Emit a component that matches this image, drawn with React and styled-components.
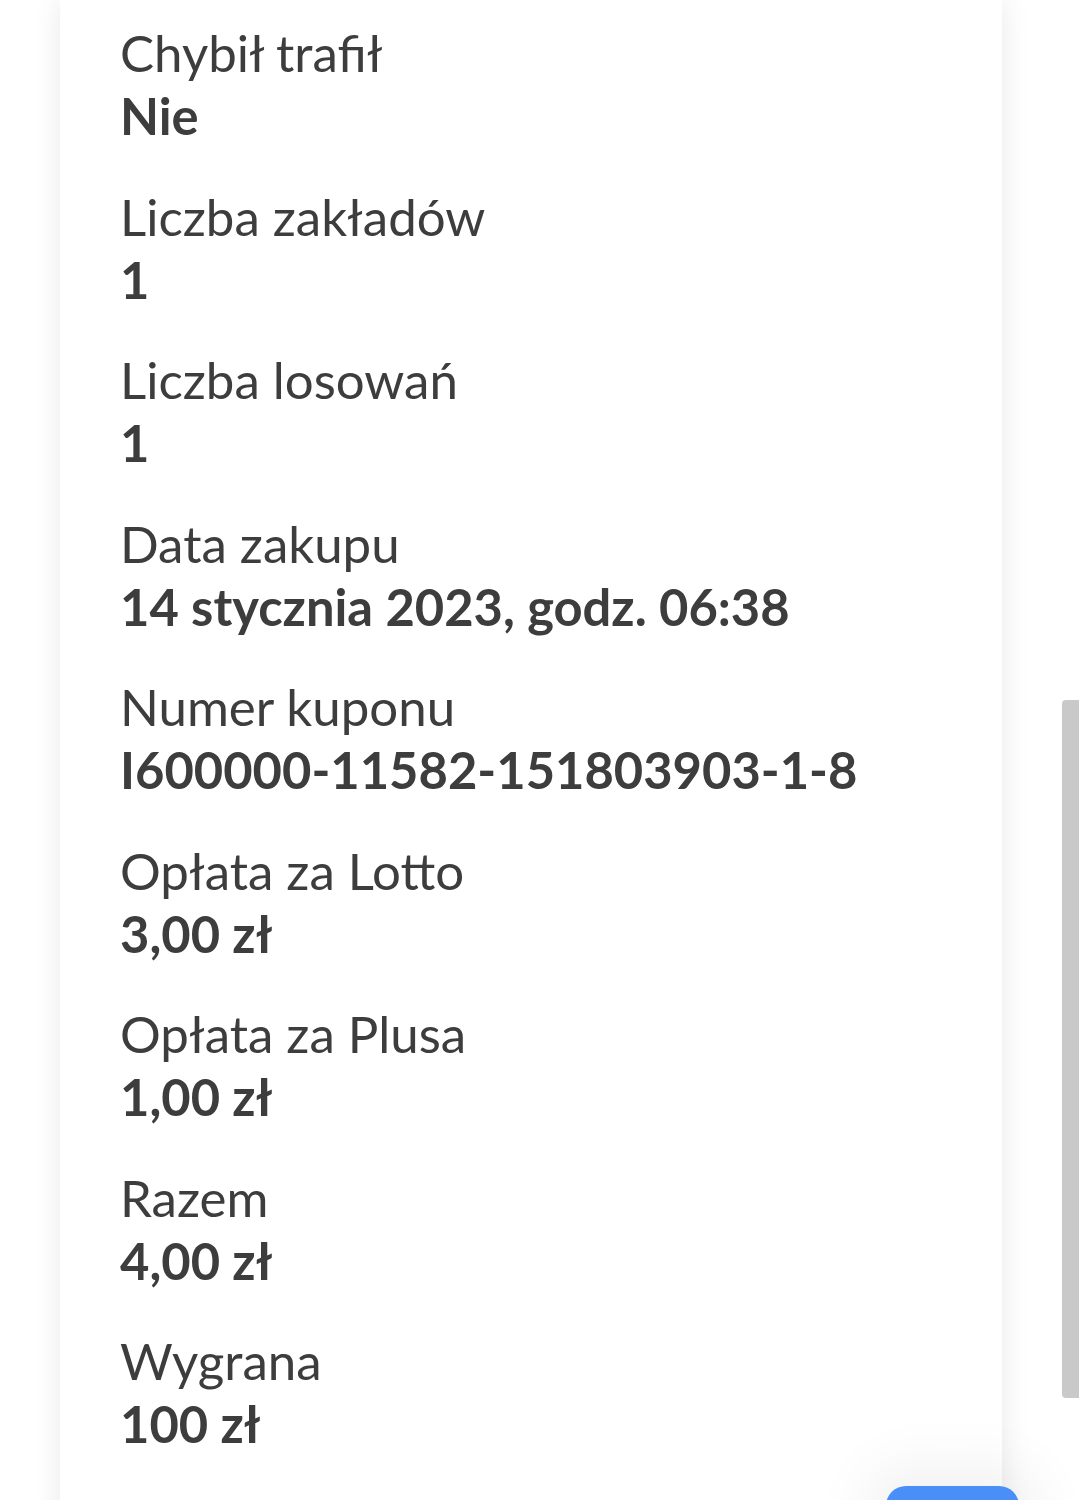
import React from "react";
import styled, { createGlobalStyle } from "styled-components";

const Global = createGlobalStyle`
  html, body { margin: 0; padding: 0; background: #ffffff; }
  body { width: 1079px; height: 1500px; overflow: hidden; font-family: Lato, "Open Sans", sans-serif; }
  #root { position: relative; width: 1079px; height: 1500px; }
`;

const Page = styled.div`
  position: relative;
  width: 1079px;
  height: 1500px;
  overflow: hidden;
  display: flex;
  padding-left: 60px;
  box-sizing: border-box;
`;

const Card = styled.section`
  width: 942px;
  min-height: 1600px;
  background: #ffffff;
  box-shadow: 0 0 28px rgba(0, 0, 0, 0.09);
  padding: 21px 60px 0;
  box-sizing: border-box;
  display: flex;
  flex-direction: column;
  gap: 37.5px;
`;

const Field = styled.div`
  display: flex;
  flex-direction: column;
  color: #3d3d3d;
  line-height: 63px;
`;

const Label = styled.span`
  font-size: 51px;
  font-weight: 400;
`;

const Value = styled.span`
  font-size: 50.7px;
  font-weight: 700;
`;

const Scrollbar = styled.div`
  position: absolute;
  left: 1062px;
  top: 700px;
  width: 17px;
  height: 698px;
  background: #c9c9c9;
  border-radius: 4px 0 0 4px;
`;

const Fab = styled.button`
  position: absolute;
  left: 886px;
  top: 1486px;
  width: 133px;
  height: 60px;
  border: none;
  border-radius: 20px;
  background: #4a8ef7;
  box-shadow: 0 0 60px 20px rgba(0, 0, 0, 0.06);
`;

const fields = [
  ["Chybił trafił", "Nie"],
  ["Liczba zakładów", "1"],
  ["Liczba losowań", "1"],
  ["Data zakupu", "14 stycznia 2023, godz. 06:38"],
  ["Numer kuponu", "I600000-11582-151803903-1-8"],
  ["Opłata za Lotto", "3,00 zł"],
  ["Opłata za Plusa", "1,00 zł"],
  ["Razem", "4,00 zł"],
  ["Wygrana", "100 zł"],
];

export default function App() {
  return (
    <>
      <Global />
      <Page>
        <Card>
          {fields.map(([l, v]) => (
            <Field key={l}>
              <Label>{l}</Label>
              <Value>{v}</Value>
            </Field>
          ))}
        </Card>
        <Scrollbar />
        <Fab aria-label="action" />
      </Page>
    </>
  );
}
